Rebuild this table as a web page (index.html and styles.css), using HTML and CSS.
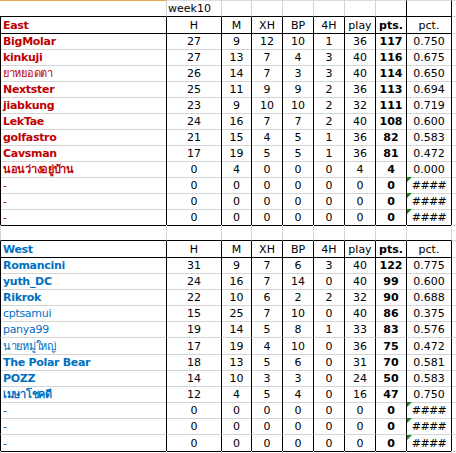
FILE: index.html
```html
<!DOCTYPE html>
<html>
<head>
<meta charset="utf-8">
<link rel="stylesheet" href="styles.css">
</head>
<body>
<div class="sheet">
  <div class="row top">
    <div class="c name first"></div><div class="c lt">week10</div><div class="c"></div><div class="c"></div><div class="c"></div><div class="c"></div><div class="c"></div><div class="c pcl"></div><div class="c pcr"></div><div class="c x"></div>
  </div>

  <div class="row hdr east">
    <div class="c name b">East</div><div class="c">H</div><div class="c">M</div><div class="c">XH</div><div class="c">BP</div><div class="c">4H</div><div class="c">play</div><div class="c b">pts.</div><div class="c">pct.</div><div class="c x"></div>
  </div>
  <div class="row data east"><div class="c name b">BigMolar</div><div class="c">27</div><div class="c">9</div><div class="c">12</div><div class="c">10</div><div class="c">1</div><div class="c">36</div><div class="c b">117</div><div class="c">0.750</div><div class="c x"></div></div>
  <div class="row data east"><div class="c name b">kinkuji</div><div class="c">27</div><div class="c">13</div><div class="c">7</div><div class="c">4</div><div class="c">3</div><div class="c">40</div><div class="c b">116</div><div class="c">0.675</div><div class="c x"></div></div>
  <div class="row data east"><div class="c name">ยาหยอดตา</div><div class="c">26</div><div class="c">14</div><div class="c">7</div><div class="c">3</div><div class="c">3</div><div class="c">40</div><div class="c b">114</div><div class="c">0.650</div><div class="c x"></div></div>
  <div class="row data east"><div class="c name b">Nextster</div><div class="c">25</div><div class="c">11</div><div class="c">9</div><div class="c">9</div><div class="c">2</div><div class="c">36</div><div class="c b">113</div><div class="c">0.694</div><div class="c x"></div></div>
  <div class="row data east"><div class="c name b">jiabkung</div><div class="c">23</div><div class="c">9</div><div class="c">10</div><div class="c">10</div><div class="c">2</div><div class="c">32</div><div class="c b">111</div><div class="c">0.719</div><div class="c x"></div></div>
  <div class="row data east"><div class="c name b">LekTae</div><div class="c">24</div><div class="c">16</div><div class="c">7</div><div class="c">7</div><div class="c">2</div><div class="c">40</div><div class="c b">108</div><div class="c">0.600</div><div class="c x"></div></div>
  <div class="row data east"><div class="c name b">golfastro</div><div class="c">21</div><div class="c">15</div><div class="c">4</div><div class="c">5</div><div class="c">1</div><div class="c">36</div><div class="c b">82</div><div class="c">0.583</div><div class="c x"></div></div>
  <div class="row data east"><div class="c name b">Cavsman</div><div class="c">17</div><div class="c">19</div><div class="c">5</div><div class="c">5</div><div class="c">1</div><div class="c">36</div><div class="c b">81</div><div class="c">0.472</div><div class="c x"></div></div>
  <div class="row data east"><div class="c name b">นอนว่างอยู่บ้าน</div><div class="c">0</div><div class="c">4</div><div class="c">0</div><div class="c">0</div><div class="c">0</div><div class="c">4</div><div class="c b">4</div><div class="c">0.000</div><div class="c x"></div></div>
  <div class="row data east"><div class="c name">-</div><div class="c">0</div><div class="c">0</div><div class="c">0</div><div class="c">0</div><div class="c">0</div><div class="c">0</div><div class="c b">0</div><div class="c err">####</div><div class="c x"></div></div>
  <div class="row data east"><div class="c name">-</div><div class="c">0</div><div class="c">0</div><div class="c">0</div><div class="c">0</div><div class="c">0</div><div class="c">0</div><div class="c b">0</div><div class="c err">####</div><div class="c x"></div></div>
  <div class="row data east last"><div class="c name">-</div><div class="c">0</div><div class="c">0</div><div class="c">0</div><div class="c">0</div><div class="c">0</div><div class="c">0</div><div class="c b">0</div><div class="c err">####</div><div class="c x"></div></div>

  <div class="row blank">
    <div class="c name first"></div><div class="c"></div><div class="c"></div><div class="c"></div><div class="c"></div><div class="c"></div><div class="c"></div><div class="c"></div><div class="c"></div><div class="c x"></div>
  </div>

  <div class="row hdr west">
    <div class="c name b">West</div><div class="c">H</div><div class="c">M</div><div class="c">XH</div><div class="c">BP</div><div class="c">4H</div><div class="c">play</div><div class="c b">pts.</div><div class="c">pct.</div><div class="c x"></div>
  </div>
  <div class="row data west"><div class="c name b">Romancini</div><div class="c">31</div><div class="c">9</div><div class="c">7</div><div class="c">6</div><div class="c">3</div><div class="c">40</div><div class="c b">122</div><div class="c">0.775</div><div class="c x"></div></div>
  <div class="row data west"><div class="c name b">yuth_DC</div><div class="c">24</div><div class="c">16</div><div class="c">7</div><div class="c">14</div><div class="c">0</div><div class="c">40</div><div class="c b">99</div><div class="c">0.600</div><div class="c x"></div></div>
  <div class="row data west"><div class="c name b">Rikrok</div><div class="c">22</div><div class="c">10</div><div class="c">6</div><div class="c">2</div><div class="c">2</div><div class="c">32</div><div class="c b">90</div><div class="c">0.688</div><div class="c x"></div></div>
  <div class="row data west"><div class="c name">cptsamui</div><div class="c">15</div><div class="c">25</div><div class="c">7</div><div class="c">10</div><div class="c">0</div><div class="c">40</div><div class="c b">86</div><div class="c">0.375</div><div class="c x"></div></div>
  <div class="row data west tall"><div class="c name">panya99</div><div class="c">19</div><div class="c">14</div><div class="c">5</div><div class="c">8</div><div class="c">1</div><div class="c">33</div><div class="c b">83</div><div class="c">0.576</div><div class="c x"></div></div>
  <div class="row data west"><div class="c name">นายหมู่ใหญ่</div><div class="c">17</div><div class="c">19</div><div class="c">4</div><div class="c">10</div><div class="c">0</div><div class="c">36</div><div class="c b">75</div><div class="c">0.472</div><div class="c x"></div></div>
  <div class="row data west"><div class="c name b">The Polar Bear</div><div class="c">18</div><div class="c">13</div><div class="c">5</div><div class="c">6</div><div class="c">0</div><div class="c">31</div><div class="c b">70</div><div class="c">0.581</div><div class="c x"></div></div>
  <div class="row data west"><div class="c name b">POZZ</div><div class="c">14</div><div class="c">10</div><div class="c">3</div><div class="c">3</div><div class="c">0</div><div class="c">24</div><div class="c b">50</div><div class="c">0.583</div><div class="c x"></div></div>
  <div class="row data west"><div class="c name b">เมษาโชคดี</div><div class="c">12</div><div class="c">4</div><div class="c">5</div><div class="c">4</div><div class="c">0</div><div class="c">16</div><div class="c b">47</div><div class="c">0.750</div><div class="c x"></div></div>
  <div class="row data west"><div class="c name">-</div><div class="c">0</div><div class="c">0</div><div class="c">0</div><div class="c">0</div><div class="c">0</div><div class="c">0</div><div class="c b">0</div><div class="c err">####</div><div class="c x"></div></div>
  <div class="row data west tall"><div class="c name">-</div><div class="c">0</div><div class="c">0</div><div class="c">0</div><div class="c">0</div><div class="c">0</div><div class="c">0</div><div class="c b">0</div><div class="c err">####</div><div class="c x"></div></div>
  <div class="row data west last"><div class="c name">-</div><div class="c">0</div><div class="c">0</div><div class="c">0</div><div class="c">0</div><div class="c">0</div><div class="c">0</div><div class="c b">0</div><div class="c err">####</div><div class="c x"></div></div>

  <div class="row blank">
    <div class="c name first"></div><div class="c"></div><div class="c"></div><div class="c"></div><div class="c"></div><div class="c"></div><div class="c"></div><div class="c"></div><div class="c"></div><div class="c x"></div>
  </div>
</div>
</body>
</html>
```

FILE: styles.css
```css
html, body {
  margin: 0;
  padding: 0;
  background: #ffffff;
}

body {
  width: 456px;
  height: 453px;
  overflow: hidden;
  font-family: "DejaVu Sans", "Noto Sans", sans-serif;
  font-size: 11px;
  color: #000000;
}

.sheet {
  display: flex;
  flex-direction: column;
}

.row {
  display: grid;
  grid-template-columns: 167px 55px 30px 31px 31px 31px 31px 31px 45px 1fr;
  height: 16px;
}

.row.tall {
  height: 17px;
}

.c {
  box-sizing: border-box;
  position: relative;
  border-right: 1px solid #000000;
  border-bottom: 1px solid #d4d4d4;
  padding-top: 2px;
  line-height: 14px;
  text-align: center;
  white-space: nowrap;
  overflow: visible;
}

.c.name {
  border-left: 1px solid #000000;
  text-align: left;
  padding-left: 2px;
  letter-spacing: -0.3px;
}

.c.x {
  border-right: none;
}

.b {
  font-weight: bold;
}

/* top row */
.row.top {
  height: 17px;
}

.row.top .c {
  border-right-color: #d4d4d4;
  border-bottom-color: #000000;
  border-top: 1px solid #dcdcdc;
  padding-top: 1px;
}

.row.top .c.first {
  border-left: none;
  border-top-color: #e3a857;
}

.row.top .c.lt {
  text-align: left;
  padding-left: 1px;
}

.row.top .c.pcl,
.row.top .c.pcr {
  border-right-color: #000000;
}

.row.top .c.x {
  border-bottom-color: #d4d4d4;
}

/* headers */
.row.hdr .c {
  border-bottom-color: #000000;
}

.row.hdr .c.x,
.row.last .c.x,
.row.blank .c.x {
  border-bottom-color: #d4d4d4;
}

.row.last .c {
  border-bottom-color: #000000;
}

.row.blank .c {
  border-right-color: #d4d4d4;
}

.row.blank .c.first {
  border-left: 1px solid #d4d4d4;
}

.row.blank + .row.hdr .c {
  border-top: none;
}

.sheet > .row.blank:nth-of-type(15) .c {
  border-bottom-color: #000000;
}

.sheet > .row.blank:nth-of-type(15) .c.x {
  border-bottom-color: #d4d4d4;
}

.row.data .c.x,
.row.blank .c.x {
  border-bottom-color: #d4d4d4;
}

.east .name {
  color: #c00000;
}

.west .name {
  color: #0070c0;
}

.err {
  letter-spacing: -0.6px;
}

.err::before {
  content: "";
  position: absolute;
  left: 0;
  top: 0;
  width: 0;
  height: 0;
  border-top: 5px solid #1a8a1a;
  border-right: 5px solid transparent;
}
```
